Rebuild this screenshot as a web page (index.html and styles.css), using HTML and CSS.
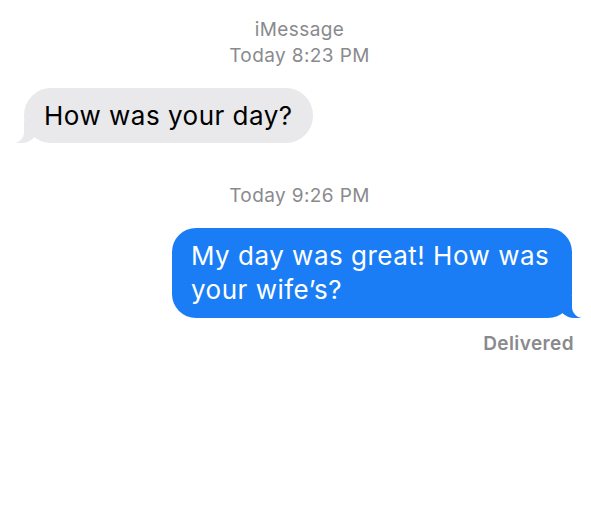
FILE: index.html
```html
<!DOCTYPE html>
<html lang="en">
<head>
<meta charset="utf-8">
<title>Messages</title>
<link rel="stylesheet" href="styles.css">
</head>
<body>
<main class="thread">
  <header class="meta meta-top">
    <div>iMessage</div>
    <div>Today 8:23 PM</div>
  </header>
  <div class="row row-in">
    <div class="bubble bubble-in">How was your day?</div>
  </div>
  <div class="meta meta-mid">Today 9:26 PM</div>
  <div class="row row-out">
    <div class="bubble bubble-out">My day was great! How was your wife’s?</div>
  </div>
  <div class="status">Delivered</div>
</main>
</body>
</html>
```

FILE: styles.css
```css
html, body {
  margin: 0;
  padding: 0;
  background: #ffffff;
}

body {
  font-family: Inter, "Liberation Sans", Arial, sans-serif;
  -webkit-font-smoothing: antialiased;
}

.thread {
  display: flex;
  flex-direction: column;
  padding: 17px 19px 0 24px;
}

.meta {
  text-align: center;
  color: #8a8a8e;
  font-size: 19px;
  letter-spacing: 0.4px;
  line-height: 26px;
  margin-left: 3px;
}

.meta-mid {
  margin-top: 40px;
}

.row {
  display: flex;
}

.row-in {
  margin-top: 19px;
  justify-content: flex-start;
}

.row-out {
  margin-top: 19px;
  justify-content: flex-end;
}

.bubble {
  position: relative;
  font-size: 26px;
  letter-spacing: 0.5px;
  border-radius: 27px;
}

.bubble-in {
  background: #e9e9eb;
  color: #000000;
  line-height: 31px;
  padding: 12px 20px;
}

.bubble-out {
  background: #1a7df6;
  color: #ffffff;
  line-height: 34px;
  padding: 11px 20px 11px 19px;
  max-width: 361px;
  border-radius: 24px;
}

/* bubble tails */
.bubble::before,
.bubble::after {
  content: "";
  position: absolute;
  bottom: 0;
  height: 22px;
}

.bubble-in::before {
  left: -8px;
  width: 22px;
  background: #e9e9eb;
  border-bottom-right-radius: 16px;
}

.bubble-in::after {
  left: -11px;
  width: 11px;
  background: #ffffff;
  border-bottom-right-radius: 11px;
}

.bubble-out::before {
  right: -9px;
  width: 23px;
  background: #1a7df6;
  border-bottom-left-radius: 16px;
}

.bubble-out::after {
  right: -12px;
  width: 12px;
  background: #ffffff;
  border-bottom-left-radius: 11px;
}

.status {
  margin-top: 13px;
  text-align: right;
  color: #8a8a8e;
  font-size: 19px;
  letter-spacing: 0.4px;
  font-weight: 600;
  line-height: 26px;
  margin-right: -2px;
}
```
